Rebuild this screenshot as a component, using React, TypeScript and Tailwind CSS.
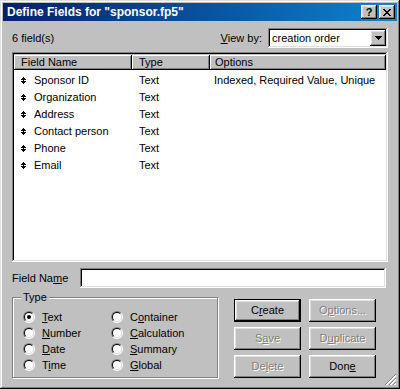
import React from 'react';

const raised =
  'shadow-[inset_-1px_-1px_#000,inset_1px_1px_#fff,inset_-2px_-2px_#808080,inset_2px_2px_#dfdfdf]';
const sunken =
  'shadow-[inset_-1px_-1px_#fff,inset_1px_1px_#808080,inset_-2px_-2px_#dfdfdf,inset_2px_2px_#000]';

interface Field {
  name: string;
  type: string;
  options: string;
}

const fields: Field[] = [
  { name: 'Sponsor ID', type: 'Text', options: 'Indexed, Required Value, Unique' },
  { name: 'Organization', type: 'Text', options: '' },
  { name: 'Address', type: 'Text', options: '' },
  { name: 'Contact person', type: 'Text', options: '' },
  { name: 'Phone', type: 'Text', options: '' },
  { name: 'Email', type: 'Text', options: '' },
];

// label with one underlined mnemonic letter
function Mn({ text, at }: { text: string; at: number }) {
  return (
    <span>
      {text.slice(0, at)}
      <u className="underline-offset-[1px]">{text[at]}</u>
      {text.slice(at + 1)}
    </span>
  );
}

function MoveArrows() {
  return (
    <svg width="5" height="7" viewBox="0 0 5 7" shapeRendering="crispEdges">
      <rect x="2" y="0" width="1" height="1" fill="#000" />
      <rect x="1" y="1" width="3" height="1" fill="#000" />
      <rect x="0" y="2" width="5" height="1" fill="#000" />
      <rect x="2" y="3" width="1" height="1" fill="#000" />
      <rect x="0" y="4" width="5" height="1" fill="#000" />
      <rect x="1" y="5" width="3" height="1" fill="#000" />
      <rect x="2" y="6" width="1" height="1" fill="#000" />
    </svg>
  );
}

function Radio({ label, at, checked }: { label: string; at: number; checked?: boolean }) {
  return (
    <div className="flex items-center gap-[7px] h-[16px]">
      <div className="w-[12px] h-[12px] rounded-full border border-t-[#808080] border-l-[#808080] border-r-white border-b-white">
        <div className="w-full h-full rounded-full border border-t-black border-l-black border-r-[#dfdfdf] border-b-[#dfdfdf] bg-white flex items-center justify-center">
          {checked && <div className="w-[4px] h-[4px] rounded-full bg-black" />}
        </div>
      </div>
      <Mn text={label} at={at} />
    </div>
  );
}

function Btn({ label, at, disabled, isDefault }: { label: string; at: number; disabled?: boolean; isDefault?: boolean }) {
  const inner = (
    <div
      className={`w-full h-full flex items-center justify-center ${raised} ${
        disabled ? 'text-[#808080] [text-shadow:1px_1px_0_#fff]' : 'text-black'
      }`}
    >
      <Mn text={label} at={at} />
    </div>
  );
  return isDefault ? (
    <div className="h-[23px] border border-black">{inner}</div>
  ) : (
    <div className="h-[23px]">{inner}</div>
  );
}

export default function App() {
  return (
    <div className="relative w-[400px] h-[389px] bg-[#c0c0c0] p-[3px] flex flex-col font-['Liberation_Sans',Arial,sans-serif] text-[11px] text-black shadow-[inset_-1px_-1px_#000,inset_1px_1px_#dfdfdf,inset_-2px_-2px_#808080,inset_2px_2px_#fff]">
      {/* Title bar */}
      <div className="h-[18px] flex items-center justify-between pl-[4px] pr-[2px] bg-gradient-to-r from-[#08206a] to-[#1084d0]">
        <span className="text-white font-bold text-[12px]">Define Fields for "sponsor.fp5"</span>
        <div className="flex gap-[2px]">
          <div className={`w-[16px] h-[14px] bg-[#c0c0c0] flex items-center justify-center font-bold text-[11px] leading-none ${raised}`}>
            ?
          </div>
          <div className={`w-[16px] h-[14px] bg-[#c0c0c0] flex items-center justify-center ${raised}`}>
            <svg width="8" height="7" viewBox="0 0 8 7" shapeRendering="crispEdges">
              <path d="M0 0h2v1H0zM6 0h2v1H6zM1 1h2v1H1zM5 1h2v1H5zM2 2h4v1H2zM3 3h2v1H3zM2 4h4v1H2zM1 5h2v1H1zM5 5h2v1H5zM0 6h2v1H0zM6 6h2v1H6z" fill="#000" />
            </svg>
          </div>
        </div>
      </div>

      <div className="flex-1 flex flex-col px-[9px]">
        {/* Count + view by */}
        <div className="mt-[7px] h-[20px] flex items-center justify-between">
          <span>6 field(s)</span>
          <div className="flex items-center gap-[6px]">
            <Mn text="View by:" at={0} />
            <div className={`w-[120px] h-[20px] bg-white flex items-center justify-between p-[2px] ${sunken}`}>
              <span className="pl-[2px]">creation order</span>
              <div className={`w-[16px] h-[16px] bg-[#c0c0c0] flex items-center justify-center ${raised}`}>
                <svg width="7" height="4" viewBox="0 0 7 4" shapeRendering="crispEdges">
                  <path d="M0 0h7v1H0zM1 1h5v1H1zM2 2h3v1H2zM3 3h1v1H3z" fill="#000" />
                </svg>
              </div>
            </div>
          </div>
        </div>

        {/* Field list */}
        <div className={`mt-[4px] h-[210px] bg-white p-[2px] flex flex-col ${sunken}`}>
          <div className="h-[16px] flex bg-[#c0c0c0] pt-[1px]">
            <div className="w-[118px] flex items-center pl-[7px] shadow-[inset_-1px_-1px_#000,inset_1px_1px_#fff,inset_-2px_-2px_#808080]">
              Field Name
            </div>
            <div className="w-[78px] flex items-center pl-[7px] shadow-[inset_-1px_-1px_#000,inset_1px_1px_#fff,inset_-2px_-2px_#808080]">
              Type
            </div>
            <div className="flex-1 flex items-center pl-[5px] shadow-[inset_-1px_-1px_#000,inset_1px_1px_#fff,inset_-2px_-2px_#808080]">
              Options
            </div>
          </div>
          {fields.map((f) => (
            <div key={f.name} className="h-[17px] pt-[3px] flex items-center">
              <div className="w-[118px] flex items-center">
                <span className="ml-[7px] w-[13px]">
                  <MoveArrows />
                </span>
                <span>{f.name}</span>
              </div>
              <div className="w-[78px] pl-[7px]">{f.type}</div>
              <div className="flex-1 pl-[4px]">{f.options}</div>
            </div>
          ))}
        </div>

        {/* Field name */}
        <div className="mt-[6px] h-[20px] flex items-center">
          <span className="w-[68px]">
            <Mn text="Field Name" at={8} />
          </span>
          <div className={`flex-1 mr-[2px] h-[20px] bg-white ${sunken}`} />
        </div>

        {/* Type group + buttons */}
        <div className="mt-[9px] flex">
          <div className="relative w-[206px] h-[81px] border border-[#808080] shadow-[inset_1px_1px_#fff,1px_1px_#fff] pt-[11px] pl-[10px]">
            <span className="absolute left-[8px] -top-[7px] leading-[13px] px-[2px] bg-[#c0c0c0]">Type</span>
            <div className="grid grid-cols-[88px_1fr]">
              <Radio label="Text" at={0} checked />
              <Radio label="Container" at={1} />
              <Radio label="Number" at={0} />
              <Radio label="Calculation" at={0} />
              <Radio label="Date" at={0} />
              <Radio label="Summary" at={0} />
              <Radio label="Time" at={1} />
              <Radio label="Global" at={0} />
            </div>
          </div>
          <div className="ml-[16px] mt-[2px] grid grid-cols-[67px_67px] gap-x-[8px] gap-y-[5px] content-start">
            <Btn label="Create" at={1} isDefault />
            <Btn label="Options..." at={1} disabled />
            <Btn label="Save" at={1} disabled />
            <Btn label="Duplicate" at={1} disabled />
            <Btn label="Delete" at={2} disabled />
            <Btn label="Done" at={3} />
          </div>
        </div>
      </div>

      {/* Resize grip */}
      <svg className="absolute right-[3px] bottom-[3px]" width="12" height="12" viewBox="0 0 12 12" shapeRendering="crispEdges">
        <path d="M11 0L0 11M11 4L4 11M11 8L8 11" stroke="#808080" strokeWidth="1.4" />
        <path d="M11 1.5L1.5 11M11 5.5L5.5 11M11 9.5L9.5 11" stroke="#fff" strokeWidth="1" />
      </svg>
    </div>
  );
}
